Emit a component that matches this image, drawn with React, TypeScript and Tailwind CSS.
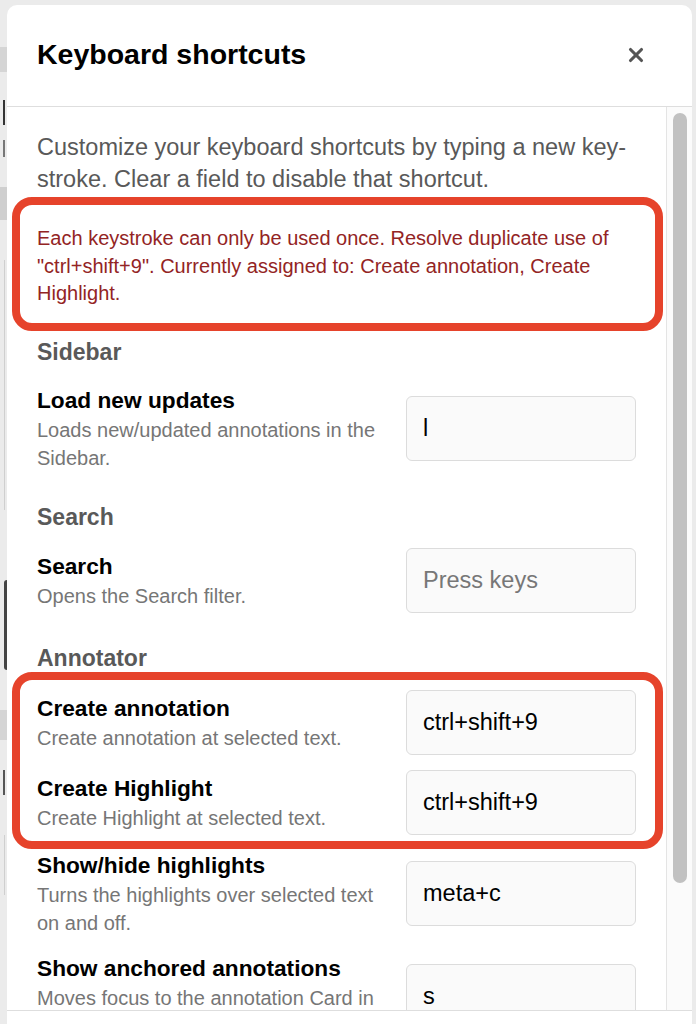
import { X } from 'lucide-react';

type Shortcut = {
  title: string;
  description: string;
  value: string;
};

const RED_BOX = 'border-[8px] border-[#e6432b] rounded-[20px]';

function ShortcutRow({ item, className = '' }: { item: Shortcut; className?: string }) {
  return (
    <div className={`flex items-center gap-4 ${className}`}>
      <div className="flex-1 min-w-0">
        <p className="text-[22.7px] leading-[30px] font-bold text-black">{item.title}</p>
        <p className="text-[20px] leading-[28px] text-[#767676] mt-px">{item.description}</p>
      </div>
      <input
        readOnly
        value={item.value}
        placeholder="Press keys"
        className="w-[230px] h-[65px] shrink-0 rounded-[6px] border border-[#dcdcdc] bg-[#fafafa] px-4 text-[23.5px] text-black placeholder:text-[#777] outline-none"
      />
    </div>
  );
}

function GroupHeading({ label, className = '' }: { label: string; className?: string }) {
  return <h3 className={`text-[23px] leading-[28px] font-bold text-[#595959] ${className}`}>{label}</h3>;
}

export default function App() {
  return (
    <div className="h-[1024px] w-full overflow-hidden bg-[#ebebeb] flex font-['Liberation_Sans',Arial,sans-serif]">
      {/* page behind the modal */}
      <div className="w-[7px] shrink-0 flex flex-col">
        <div className="h-[47px]" />
        <div className="h-[25px] bg-[#d5d5d5]" />
        <div className="h-[28px]" />
        <div className="h-[25px] ml-[3px] w-[2px] bg-[#333]" />
        <div className="h-[15px]" />
        <div className="h-[17px] ml-[3px] w-[2px] bg-[#777]" />
        <div className="h-[30px]" />
        <div className="h-[33px] bg-[#cfcfcf]" />
        <div className="h-[40px]" />
        <div className="h-[250px] ml-[4px] w-px bg-[#cfcfcf]" />
        <div className="h-[70px]" />
        <div className="h-[90px] ml-[4px] w-[3px] bg-[#444] rounded-l" />
        <div className="h-[40px]" />
        <div className="h-[30px] bg-[#d5d5d5]" />
        <div className="h-[30px]" />
        <div className="h-[25px] ml-[3px] w-[2px] bg-[#555]" />
        <div className="h-[40px]" />
        <div className="h-[60px] ml-[4px] w-px bg-[#cfcfcf]" />
      </div>

      <div className="mt-[5px] w-[685px] h-[1019px] shrink-0 bg-white rounded-t-[10px] flex flex-col">
        {/* Header */}
        <div className="h-[102px] shrink-0 border-b border-[#dedede] pl-[30px] pr-[45px] flex items-center justify-between">
          <h2 className="text-[28.5px] font-bold text-black -mt-[2px]">Keyboard shortcuts</h2>
          <X className="w-[22px] h-[22px] text-[#555] -mt-[1px]" strokeWidth={3.4} />
        </div>

        {/* Body */}
        <div className="flex-1 min-h-0 flex overflow-hidden">
          <div className="flex-1 min-w-0 px-[30px] pt-[24px]">
            <p className="text-[23.5px] leading-[32px] text-[#595959]">
              Customize your keyboard shortcuts by typing a new key-
              <br />
              stroke. Clear a field to disable that shortcut.
            </p>

            <div className={`${RED_BOX} mt-[2px] -ml-[25px] -mr-[27px] pl-[17px] pr-[19px] pt-[20px] pb-[15px]`}>
              <p className="text-[20px] leading-[27.5px] text-[#932424]">
                Each keystroke can only be used once. Resolve duplicate use of "ctrl+shift+9". Currently
                assigned to: Create annotation, Create Highlight.
              </p>
            </div>

            <GroupHeading label="Sidebar" className="mt-[7px]" />
            <ShortcutRow
              className="mt-[19px]"
              item={{ title: 'Load new updates', description: 'Loads new/updated annotations in the Sidebar.', value: 'l' }}
            />

            <GroupHeading label="Search" className="mt-[31px]" />
            <ShortcutRow
              className="mt-[17px]"
              item={{ title: 'Search', description: 'Opens the Search filter.', value: '' }}
            />

            <GroupHeading label="Annotator" className="mt-[31px]" />
            <div className={`${RED_BOX} -ml-[25px] -mr-[27px] pl-[17px] pr-[19px] pt-[10px] pb-[6px]`}>
              <ShortcutRow
                item={{ title: 'Create annotation', description: 'Create annotation at selected text.', value: 'ctrl+shift+9' }}
              />
              <ShortcutRow
                className="mt-[15px]"
                item={{ title: 'Create Highlight', description: 'Create Highlight at selected text.', value: 'ctrl+shift+9' }}
              />
            </div>
            <ShortcutRow
              className="mt-px"
              item={{ title: 'Show/hide highlights', description: 'Turns the highlights over selected text on and off.', value: 'meta+c' }}
            />
            <ShortcutRow
              className="mt-[16px]"
              item={{
                title: 'Show anchored annotations',
                description: 'Moves focus to the annotation Card in the Sidebar.',
                value: 's',
              }}
            />
          </div>

          {/* Scrollbar */}
          <div className="w-[26px] shrink-0 border-l border-[#e4e4e4] bg-[#fbfbfb] pl-[6px] pt-[6px]">
            <div className="w-[14px] h-[770px] rounded-full bg-[#c1c1c1]" />
          </div>
        </div>

        {/* Footer */}
        <div className="h-[14px] shrink-0 border-t border-[#dedede]" />
      </div>
    </div>
  );
}
